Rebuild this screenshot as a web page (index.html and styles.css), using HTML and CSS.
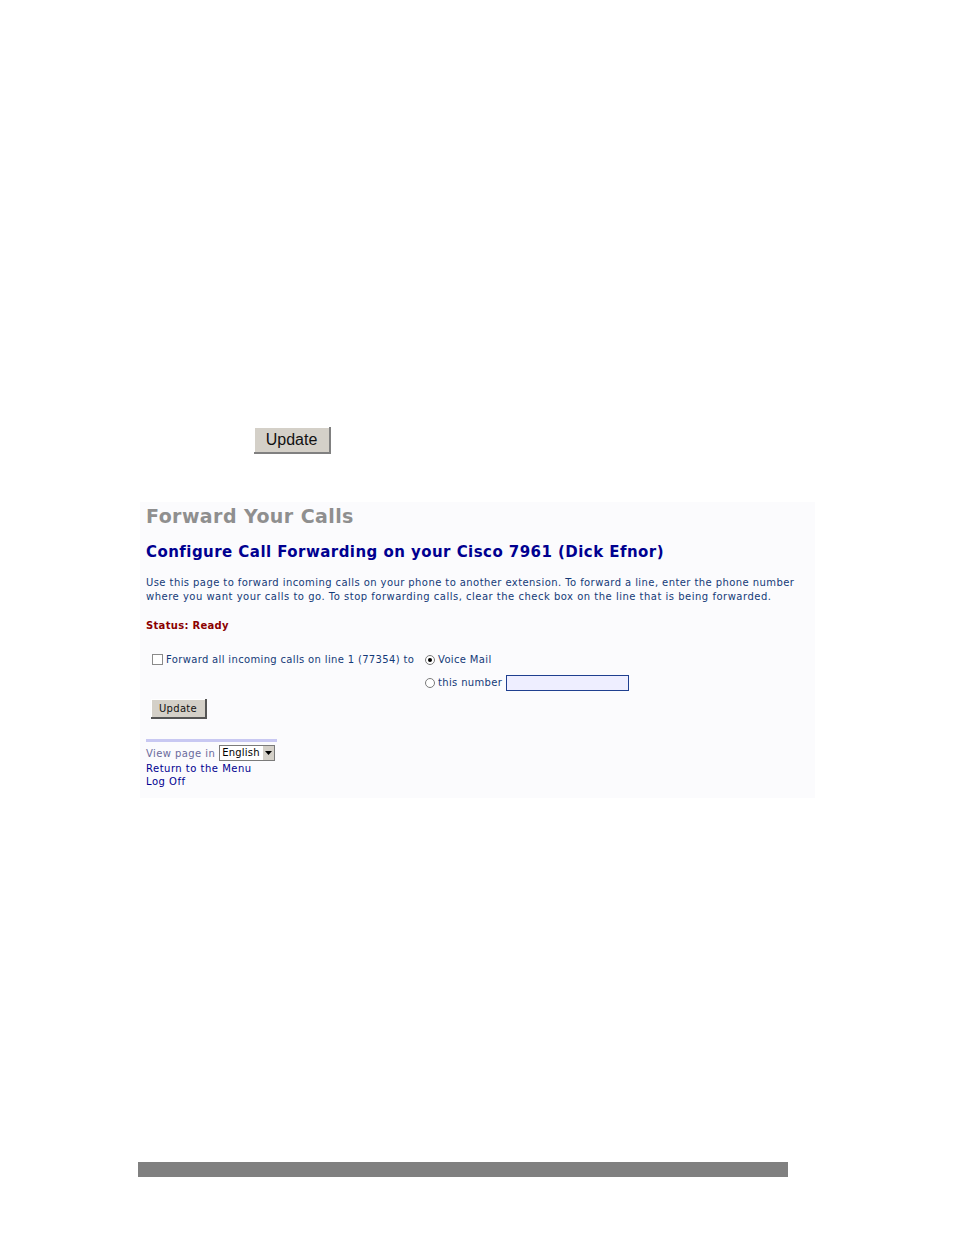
FILE: index.html
```html
<!DOCTYPE html>
<html>
<head>
<meta charset="utf-8">
<link rel="stylesheet" href="styles.css">
</head>
<body>
<div class="page">
  <div class="top-action">
    <button class="big-btn">Update</button>
  </div>
  <div class="panel">
    <h1 class="title">Forward Your Calls</h1>
    <h2 class="subtitle">Configure Call Forwarding on your Cisco 7961 (Dick Efnor)</h2>
    <p class="intro">Use this page to forward incoming calls on your phone to another extension. To forward a line, enter the phone number<br><span class="l2">where you want your calls to go. To stop forwarding calls, clear the check box on the line that is being forwarded.</span></p>
    <p class="status">Status: Ready</p>
    <div class="fwd">
      <div class="fwd-left">
        <span class="check"></span>
        <span class="txt">Forward all incoming calls on line 1 (77354) to</span>
      </div>
      <div class="fwd-right">
        <div class="opt"><span class="radio on"></span><span class="txt">Voice Mail</span></div>
        <div class="opt"><span class="radio"></span><span class="txt">this number</span><span class="numbox"></span></div>
      </div>
    </div>
    <button class="small-btn">Update</button>
    <div class="footer">
      <div class="rule"></div>
      <div class="lang"><span class="view">View page in</span><span class="select"><span class="sel-text">English</span><span class="sel-arrow"><svg width="7" height="4" viewBox="0 0 7 4"><path d="M0 0H7L3.5 4Z" fill="#000"/></svg></span></span></div>
      <div class="link">Return to the Menu</div>
      <div class="link">Log Off</div>
    </div>
  </div>
  <div class="bottom-bar"></div>
</div>
</body>
</html>
```
FILE: styles.css
```css
html, body {
  margin: 0;
  padding: 0;
  background: #ffffff;
}
.page {
  width: 954px;
  height: 1235px;
  position: relative;
  font-family: "DejaVu Sans", Verdana, sans-serif;
}
.top-action {
  padding: 427px 0 0 254px;
  height: 27px;
}
.big-btn {
  display: block;
  width: 77px;
  height: 27px;
  margin: 0;
  padding: 0;
  background: #d4d0c8;
  border: none;
  border-right: 2px solid #808080;
  border-bottom: 2px solid #808080;
  box-shadow: inset 1px 1px 0 #ffffff;
  font-family: "Liberation Sans", Arial, sans-serif;
  font-size: 16px;
  color: #111;
  line-height: 23px;
}
.panel {
  margin: 48px 0 0 140px;
  width: 675px;
  height: 296px;
  background: #fbfbfd;
  padding: 0 0 0 6px;
  box-sizing: border-box;
}
.title {
  margin: 0;
  padding-top: 3px;
  font-size: 19px;
  line-height: 23px;
  color: #8f8f8f;
  font-weight: bold;
  letter-spacing: 0.42px;
}
.subtitle {
  margin: 15px 0 0;
  font-size: 15px;
  line-height: 18px;
  color: #000090;
  font-weight: bold;
  letter-spacing: 0.45px;
}
.intro {
  margin: 15px 0 0;
  font-size: 10px;
  line-height: 14px;
  color: #143a78;
  letter-spacing: 0.42px;
}
.intro .l2 {
  letter-spacing: 0.5px;
}
.status {
  margin: 15px 0 0;
  font-size: 10px;
  line-height: 13px;
  color: #8b0000;
  font-weight: bold;
  letter-spacing: 0.3px;
}
.fwd {
  display: flex;
  margin: 21px 0 0 6px;
  font-size: 10px;
  color: #143a78;
  letter-spacing: 0.34px;
}
.fwd-left {
  display: flex;
  align-items: center;
  height: 13px;
  width: 273px;
}
.check {
  width: 9px;
  height: 9px;
  border: 1px solid #8a8a8a;
  background: #fff;
  margin-right: 3px;
}
.fwd-right {
  display: flex;
  flex-direction: column;
  gap: 10px;
}
.opt {
  display: flex;
  align-items: center;
  height: 13px;
}
.radio {
  width: 8px;
  height: 8px;
  border: 1px solid #7a7a7a;
  border-radius: 50%;
  background: #fff;
  margin-right: 3px;
  position: relative;
}
.radio.on::after {
  content: "";
  position: absolute;
  left: 2px;
  top: 2px;
  width: 4px;
  height: 4px;
  border-radius: 50%;
  background: #000;
}
.numbox {
  width: 121px;
  height: 14px;
  border: 1px solid #1f3f8f;
  background: #eeeeff;
  margin-left: 4px;
}
.small-btn {
  display: block;
  margin: 10px 0 0 5px;
  width: 56px;
  height: 20px;
  padding: 0;
  background: #d4d0c8;
  border: none;
  border-right: 2px solid #555;
  border-bottom: 2px solid #555;
  box-shadow: inset 1px 1px 0 #fff;
  font-family: "DejaVu Sans", Verdana, sans-serif;
  font-size: 10px;
  letter-spacing: 0.3px;
  color: #111;
}
.footer {
  margin-top: 20px;
  width: 131px;
}
.rule {
  height: 3px;
  background: #c8c8f2;
}
.lang {
  display: flex;
  align-items: center;
  margin-top: 3px;
  height: 16px;
  font-size: 10px;
  letter-spacing: 0.42px;
}
.view {
  color: #6a6a9c;
  margin-right: 4px;
}
.select {
  display: flex;
  align-items: stretch;
  height: 16px;
  box-sizing: border-box;
  border: 1px solid #7a7a7a;
  background: #fff;
}
.sel-text {
  line-height: 14px;
  color: #000;
  padding: 0 2px;
  letter-spacing: 0.2px;
}
.sel-arrow {
  width: 11px;
  background: #d4d0c8;
  display: flex;
  align-items: center;
  justify-content: center;
  border-left: 1px solid #fff;
}
.link {
  font-size: 10px;
  line-height: 13px;
  color: #000090;
  letter-spacing: 0.5px;
}
.lang + .link {
  margin-top: 1px;
}
.bottom-bar {
  position: absolute;
  left: 138px;
  top: 1162px;
  width: 650px;
  height: 15px;
  background: #808080;
}
```
